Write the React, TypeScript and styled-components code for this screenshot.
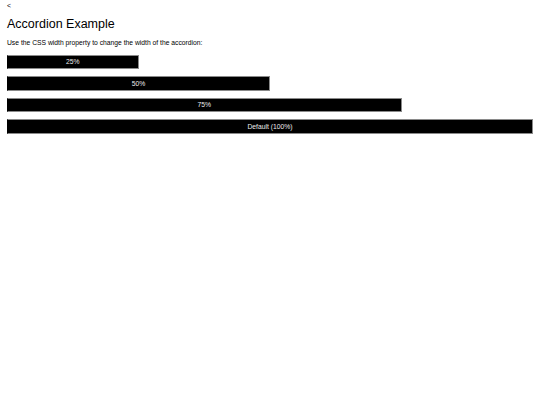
import styled, { createGlobalStyle } from 'styled-components';

const GlobalStyle = createGlobalStyle`
  html, body {
    margin: 0;
    padding: 0;
    background: #ffffff;
  }
  body {
    font-family: "Liberation Sans", Arial, sans-serif;
    color: #000000;
  }
`;

const Page = styled.div`
  padding: 0 7px;
  display: flex;
  flex-direction: column;
`;

const BackLink = styled.a`
  font-size: 6.75px;
  line-height: 8px;
  margin-top: 1.5px;
  color: #000;
  text-decoration: none;
`;

const Title = styled.h1`
  font-size: 12.5px;
  font-weight: normal;
  line-height: 15px;
  margin: 7.5px 0 0;
`;

const Intro = styled.p`
  font-size: 6.75px;
  line-height: 8px;
  margin: 7px 0 0;
`;

const AccordionList = styled.div`
  display: flex;
  flex-direction: column;
  gap: 7px;
  margin-top: 7.5px;
`;

const Accordion = styled.div<{ $width: number }>`
  width: ${(p) => p.$width}%;
`;

const Header = styled.button`
  display: flex;
  align-items: center;
  justify-content: center;
  width: 100%;
  height: 14.5px;
  padding: 0;
  background: #000;
  border: 1px solid #8a8a8a;
  border-left-color: #000;
  color: #ececec;
  font-family: "Liberation Sans", Arial, sans-serif;
  font-size: 6.75px;
  cursor: pointer;
`;

const items = [
  { label: '25%', width: 25 },
  { label: '50%', width: 50 },
  { label: '75%', width: 75 },
  { label: 'Default (100%)', width: 100 },
];

export default function App() {
  return (
    <>
      <GlobalStyle />
      <Page>
        <BackLink href="#">&lt;</BackLink>
        <Title>Accordion Example</Title>
        <Intro>Use the CSS width property to change the width of the accordion:</Intro>
        <AccordionList>
          {items.map((item) => (
            <Accordion key={item.label} $width={item.width}>
              <Header>{item.label}</Header>
            </Accordion>
          ))}
        </AccordionList>
      </Page>
    </>
  );
}
